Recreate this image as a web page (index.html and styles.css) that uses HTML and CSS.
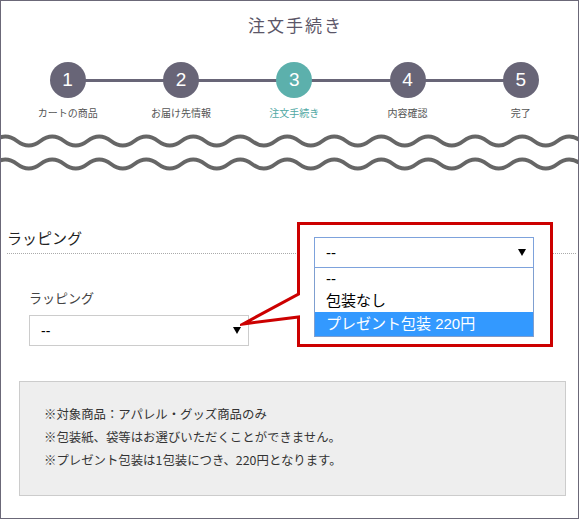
FILE: index.html
```html
<!DOCTYPE html>
<html lang="ja">
<head>
<meta charset="utf-8">
<title>注文手続き</title>
<link rel="stylesheet" href="styles.css">
</head>
<body>
<div class="page">
  <h1 class="title">注文手続き</h1>
  <ol class="steps">
    <li class="step"><span class="num">1</span><span class="label">カートの商品</span></li>
    <li class="step"><span class="num">2</span><span class="label">お届け先情報</span></li>
    <li class="step current"><span class="num">3</span><span class="label">注文手続き</span></li>
    <li class="step"><span class="num">4</span><span class="label">内容確認</span></li>
    <li class="step"><span class="num">5</span><span class="label">完了</span></li>
  </ol>
  <svg class="waves" width="577" height="48" viewBox="0 0 577 48" aria-hidden="true">
    <path id="wave" d="M-31 16 Q-19.25 25 -7.5 16 T16 16 T39.5 16 T63 16 T86.5 16 T110 16 T133.5 16 T157 16 T180.5 16 T204 16 T227.5 16 T251 16 T274.5 16 T298 16 T321.5 16 T345 16 T368.5 16 T392 16 T415.5 16 T439 16 T462.5 16 T486 16 T509.5 16 T533 16 T556.5 16 T580 16 T603.5 16" fill="none" stroke="#666" stroke-width="4"/>
    <use href="#wave" y="23"/>
  </svg>

  <h2 class="sec-title">ラッピング</h2>
  <div class="field">
    <span class="field-label">ラッピング</span>
    <div class="select"><span>--</span><span class="arrow"></span></div>
  </div>

  <div class="note">
    <p>※対象商品：アパレル・グッズ商品のみ</p>
    <p>※包装紙、袋等はお選びいただくことができません。</p>
    <p>※プレゼント包装は1包装につき、220円となります。</p>
  </div>

  <div class="callout">
    <svg class="callout-bg" width="316" height="130" viewBox="0 0 316 130" aria-hidden="true">
      <path d="M58.5 3.5 H311.5 V125.5 H58.5 V97 L3 104 L58.5 74 Z" fill="#fff" stroke="#cc0000" stroke-width="3" stroke-linejoin="miter" stroke-miterlimit="10"/>
    </svg>
    <div class="dd">
      <div class="dd-select"><span>--</span><span class="arrow"></span></div>
      <ul class="dd-list">
        <li class="opt">--</li>
        <li class="opt">包装なし</li>
        <li class="opt sel">プレゼント包装 220円</li>
      </ul>
    </div>
  </div>
</div>
</body>
</html>
```
FILE: styles.css
```css
html, body {
  margin: 0;
  padding: 0;
  background: #fff;
}

.page {
  position: relative;
  width: 579px;
  height: 519px;
  box-sizing: border-box;
  border: 1px solid #6b6878;
  background: #fff;
  overflow: hidden;
  font-family: "Noto Sans CJK JP", sans-serif;
}

.title {
  margin: 0;
  padding: 12px 0 0 12px;
  font-size: 17px;
  line-height: 24px;
  font-weight: 400;
  letter-spacing: 2px;
  color: #5b5668;
  text-align: center;
}

.steps {
  position: relative;
  display: flex;
  list-style: none;
  margin: 25px 0 0;
  padding: 0 0 0 10px;
}

.steps::before {
  content: "";
  position: absolute;
  left: 66.65px;
  width: 453.2px;
  top: 17px;
  height: 3px;
  background: #686577;
}

.step {
  flex: 0 0 113.3px;
  display: flex;
  flex-direction: column;
  align-items: center;
  gap: 8px;
}

.num {
  position: relative;
  width: 36px;
  height: 36px;
  border-radius: 50%;
  background: #686577;
  color: #fff;
  font: 19px/36px "Liberation Sans", sans-serif;
  text-align: center;
}

.step.current .num {
  background: #5cb0ac;
}

.label {
  font-size: 10px;
  line-height: 14px;
  color: #555;
  white-space: nowrap;
}

.step.current .label {
  color: #4fa8a3;
}

.waves {
  display: block;
  margin-top: 5px;
}

.sec-title {
  margin: 54px 2px 0 6px;
  padding: 0 0 4px 0;
  font-size: 15px;
  line-height: 22px;
  font-weight: 400;
  color: #222;
  border-bottom: 1px dotted #aaa;
}

.field {
  margin: 35px 0 0 28px;
}

.field-label {
  display: block;
  font-size: 13px;
  line-height: 18px;
  color: #444;
}

.select {
  margin-top: 8px;
  width: 220px;
  height: 31px;
  box-sizing: border-box;
  border: 1px solid #ccc;
  display: flex;
  align-items: center;
  justify-content: space-between;
  padding: 0 7px 0 11px;
  font: 14px "Liberation Sans", sans-serif;
  color: #000;
}

.arrow {
  width: 0;
  height: 0;
  border-left: 4px solid transparent;
  border-right: 4px solid transparent;
  border-top: 7px solid #000;
}

.note {
  margin: 35px 12px 0 18px;
  padding: 21px 24px 23px;
  background: #eee;
  border: 1px solid #ccc;
  font-size: 12.4px;
  line-height: 23px;
  color: #333;
}

.note p {
  margin: 0;
}

.callout {
  position: absolute;
  left: 239px;
  top: 219px;
  width: 316px;
  height: 130px;
  box-sizing: border-box;
  padding: 17px 0 0 74px;
}

.callout-bg {
  position: absolute;
  left: 0;
  top: 0;
}

.dd {
  position: relative;
  width: 220px;
}

.dd-select {
  height: 31px;
  box-sizing: border-box;
  border: 1px solid #7da2dc;
  display: flex;
  align-items: center;
  justify-content: space-between;
  padding: 0 7px 0 11px;
  background: #fff;
  font: 15px "Liberation Sans", "Noto Sans CJK JP", sans-serif;
  color: #000;
}

.dd-list {
  list-style: none;
  margin: 0;
  padding: 0;
  border: 1px solid #7f9fd0;
  border-top: 0;
  background: #fff;
}

.opt {
  height: 22px;
  padding-left: 11px;
  font: 15px/22px "Liberation Sans", "Noto Sans CJK JP", sans-serif;
  color: #000;
  white-space: nowrap;
}

.opt.sel {
  height: 24px;
  line-height: 24px;
  background: #3399ff;
  color: #fff;
}
```
